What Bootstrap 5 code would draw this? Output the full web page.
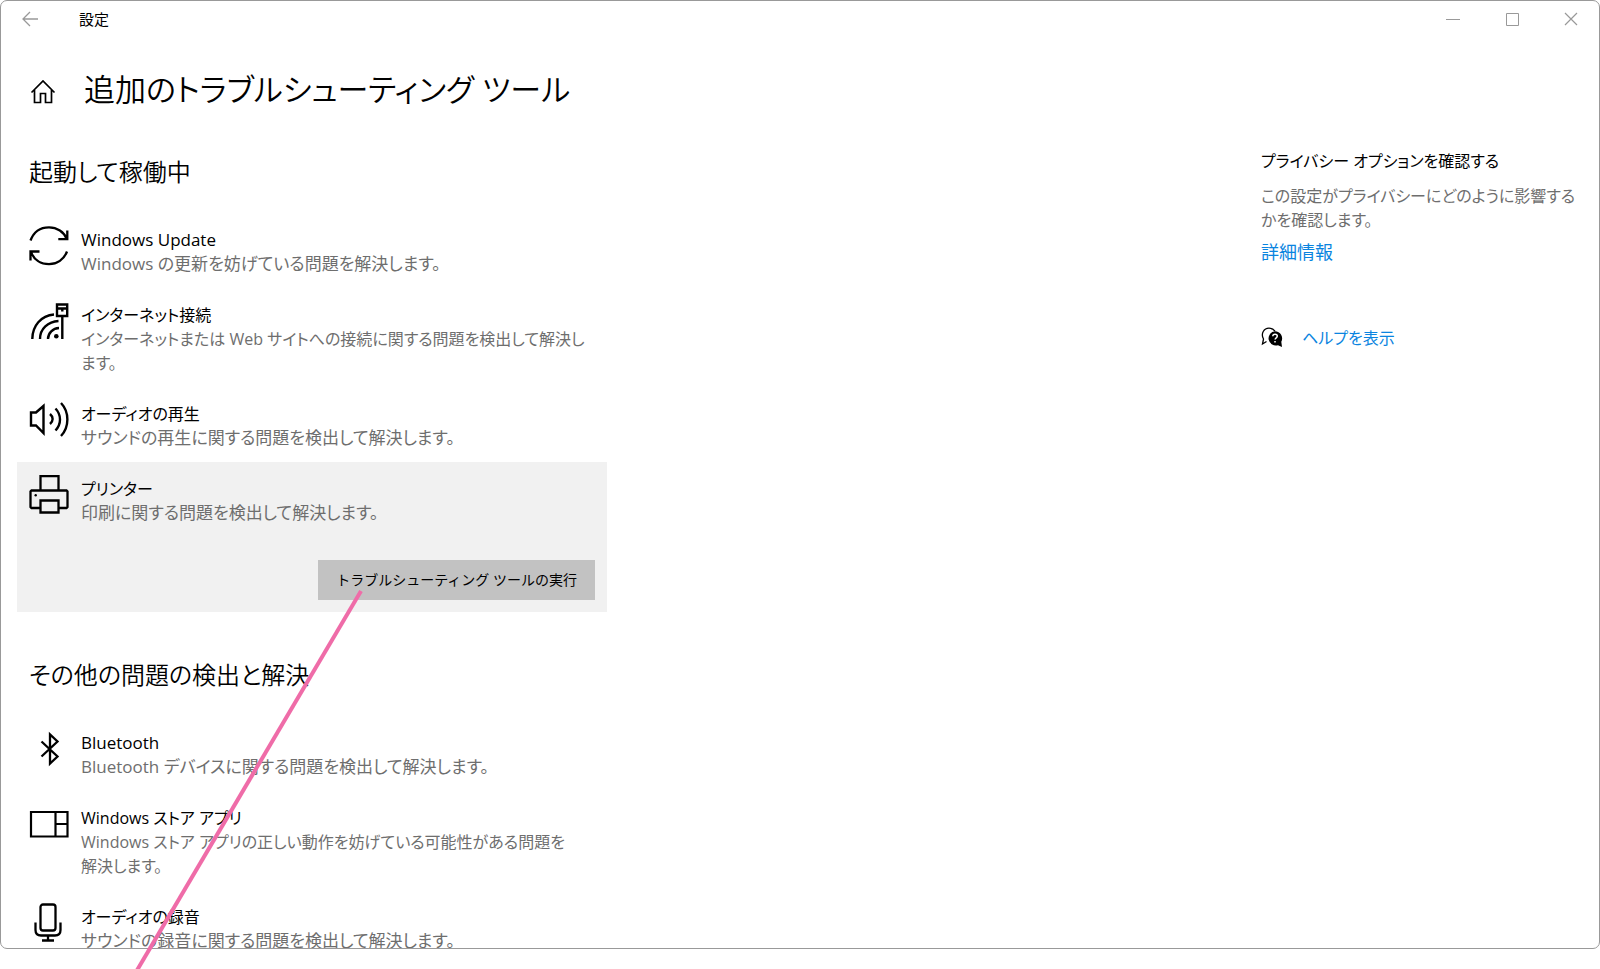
<!DOCTYPE html>
<html lang="ja">
<head>
<meta charset="utf-8">
<meta name="viewport" content="width=device-width, initial-scale=1">
<title>設定</title>
<link rel="stylesheet" href="https://cdn.jsdelivr.net/npm/bootstrap@5.3.0/dist/css/bootstrap.min.css">
<style>
  body { font-family: "Open Sans", "Noto Sans CJK JP", sans-serif; font-feature-settings: "palt"; font-size: 17px; line-height: 24px; color: #000; background: #fff; overflow: hidden; }
  svg { fill: none; stroke: currentColor; flex-shrink: 0; }
  .app-window { height: calc(100vh - 20px); border: 1px solid #999; border-radius: 7px; overflow: hidden; }
  .title-bar { height: 36px; font-size: 15px; padding-left: 20px; }
  .back-btn { margin-right: 38px; }
  .plain-btn { background: none; border: 0; padding: 0; display: flex; color: #999; }
  .win-controls { gap: 43px; padding-right: 20px; }
  .page-head { height: 72px; margin-top: 18px; padding-left: 29px; gap: 28px; }
  .page-head h1 { font-size: 31px; line-height: 48px; font-weight: 350; margin: 0; padding-bottom: 4px; }
  .main-col { width: 590px; margin-left: 16px; }
  .main-col h2 { font-size: 24px; line-height: 32px; font-weight: 350; margin: 0; padding-left: 12px; }
  .first-head { padding-top: 29px; }
  .tools { margin-top: 25px; }
  .second-head { padding-top: 47px; }
  .tool { padding: 13px 12px 11px; }
  .tool + .tool { margin-top: 1px; }
  .tool h3, .tool p { font-size: 17px; line-height: 24px; font-weight: 400; margin: 0; white-space: nowrap; }
  .tool h3 { padding-top: 2px; }
  .tool .kana { font-size: 16px; }
  .muted { color: #6e6e6e; }
  .tool.chosen { background: #f1f1f1; padding-bottom: 12px; }
  .run-btn { background: #c2c2c2; border: 0; border-radius: 0; height: 40px; padding: 0 18px; margin-top: 35px; font-size: 14px; line-height: 24px; color: #000; }
  .side { width: 310px; margin-right: 28px; padding-top: 22px; font-size: 16px; white-space: nowrap; }
  .side h2 { font-size: 16px; line-height: 24px; font-weight: 400; margin: 0 0 11px; }
  .side a { color: #0a84e0; text-decoration: none; }
  .more { margin-top: 8px; font-size: 18px; }
  .help { margin-top: 62px; gap: 19px; }
  .pointer-line { position: absolute; left: 0; top: 0; pointer-events: none; }
</style>
</head>
<body>
<div class="app-window">
  <header class="title-bar d-flex align-items-center justify-content-between">
    <div class="d-flex align-items-center">
      <button class="plain-btn back-btn" type="button" aria-label="戻る"><svg width="20" height="16" viewBox="0 0 20 16" stroke-width="1.3"><path d="M17 8H2M9 1 2 8l7 7"/></svg></button>
      <span>設定</span>
    </div>
    <div class="win-controls d-flex">
      <button class="plain-btn" type="button" aria-label="最小化"><svg width="16" height="16" viewBox="0 0 16 16"><path d="M1 8.500h14"/></svg></button>
      <button class="plain-btn" type="button" aria-label="最大化"><svg width="16" height="16" viewBox="0 0 16 16"><path d="M2.500 2.500h12v12h-12z"/></svg></button>
      <button class="plain-btn" type="button" aria-label="閉じる"><svg width="16" height="16" viewBox="0 0 16 16" stroke-width="1.200"><path d="m2 2 12 12M14 2 2 14"/></svg></button>
    </div>
  </header>

  <div class="page-head d-flex align-items-center">
    <svg width="26" height="26" viewBox="0 0 26 26" stroke-width="1.700"><path d="M1.500 14.500 13 3l11.500 11.500M4.500 11.500v13h6v-9h5v9h6v-13"/></svg>
    <h1>追加のトラブルシューティング ツール</h1>
  </div>

  <div class="d-flex justify-content-between align-items-start">
    <main class="main-col">
      <h2 class="first-head">起動して稼働中</h2>
      <div class="tools">
        <section class="tool d-flex gap-2">
          <svg class="me-1" width="40" height="40" viewBox="0 0 40 40" stroke-width="2.300"><path d="M1.500 14.500C5 5 12 1.300 20 1.300c8 0 15 4.500 18 12M38 25.500c-3 8-10 12.700-18 12.700S5 34 2 26M38.300 4.500v8.700h-9M10.500 25.500h-9v9"/></svg>
          <div><h3>Windows Update</h3><p class="muted">Windows の更新を妨げている問題を解決します。</p></div>
        </section>
        <section class="tool d-flex gap-2">
          <svg class="me-1" width="40" height="40" viewBox="0 0 40 40" stroke-width="2.400"><path d="M28 3.500h10.200v11.500H28zM28 7.500h10.200M33.300 7.500v3M33.300 15v23M3.300 38C3.300 25 12 14.500 25 13.500M11 38c0-10 8-17.500 18.500-18M19 38c0-6 5-10.700 11-11"/><circle cx="27.300" cy="35.300" r="2.300" fill="currentColor" stroke="none"/></svg>
          <div><h3 class="kana">インターネット接続</h3><p class="muted kana">インターネットまたは Web サイトへの接続に関する問題を検出して解決し<br>ます。</p></div>
        </section>
        <section class="tool d-flex gap-2">
          <svg class="me-1" width="40" height="40" viewBox="0 0 40 40" stroke-width="2.400"><path d="M2 12.500h5l7.500-6.500v27L7 25.500H2zM21 14c3.500 3 3.500 7 0 10M26.500 8.500c6 6.500 6 15.500 0 22M32 3c8.500 9 8.500 24 0 33"/></svg>
          <div><h3 class="kana">オーディオの再生</h3><p class="muted">サウンドの再生に関する問題を検出して解決します。</p></div>
        </section>
        <section class="tool chosen">
          <div class="d-flex gap-2">
            <svg class="me-1" width="40" height="40" viewBox="0 0 40 40" stroke-width="2.300"><path d="M11.500 15.500V1.200h18v14.300M11.500 33H2.500l-1-1V16.500l1-1h35l1 1V32l-1 1h-8M11.500 25.500h18v12h-18z"/><circle cx="6.700" cy="20.300" r="1.200" fill="currentColor" stroke="none"/></svg>
            <div><h3 class="kana">プリンター</h3><p class="muted">印刷に関する問題を検出して解決します。</p></div>
          </div>
          <div class="d-flex justify-content-end"><button class="run-btn" type="button">トラブルシューティング ツールの実行</button></div>
        </section>
      </div>

      <h2 class="second-head">その他の問題の検出と解決</h2>
      <div class="tools">
        <section class="tool d-flex gap-2">
          <svg class="me-1" width="40" height="40" viewBox="0 0 40 40" stroke-width="2.300"><path d="m12.500 12.500 16 15-7.500 7V5.500l7.500 7-16 15"/></svg>
          <div><h3>Bluetooth</h3><p class="muted">Bluetooth デバイスに関する問題を検出して解決します。</p></div>
        </section>
        <section class="tool d-flex gap-2">
          <svg class="me-1" width="40" height="40" viewBox="0 0 40 40" stroke-width="2.200"><path d="M2 8h36.500v24.500H2zM26.500 8v24.500M26.500 20h12"/></svg>
          <div><h3 class="kana">Windows ストア アプリ</h3><p class="muted kana">Windows ストア アプリの正しい動作を妨げている可能性がある問題を<br>解決します。</p></div>
        </section>
        <section class="tool d-flex gap-2">
          <svg class="me-1" width="40" height="40" viewBox="0 0 40 40" stroke-width="2.300"><rect x="11.500" y="1.500" width="15" height="26" rx="2.500"/><path d="M6.500 19.500V27q0 5.500 5.500 5.500h14q5.500 0 5.500-5.500v-7.500M19 32.500v5M13 37.500h12"/></svg>
          <div><h3 class="kana">オーディオの録音</h3><p class="muted">サウンドの録音に関する問題を検出して解決します。</p></div>
        </section>
      </div>
    </main>

    <aside class="side">
      <h2>プライバシー オプションを確認する</h2>
      <div class="muted">この設定がプライバシーにどのように影響する<br>かを確認します。</div>
      <div class="more"><a href="#">詳細情報</a></div>
      <div class="help d-flex align-items-center">
        <svg width="22" height="22" viewBox="0 0 22 22" stroke-width="1.300"><path d="M5.500 14.500 1.500 17l1-5C-.5 6.500 3 1.200 8 1.200c2.500 0 4.500 1 6 3"/><path d="M14 4.200a7.200 7.200 0 0 1 6.300 10.600l.7 5.200-4-1.800A7.200 7.200 0 1 1 14 4.200z" fill="currentColor" stroke="none"/><path d="M11.800 9.300c0-3 4.500-2.700 4.500-.2 0 1.800-2.200 1.600-2.200 3.500M14 14v1.600" stroke="#fff" stroke-width="1.500"/></svg>
        <a href="#">ヘルプを表示</a>
      </div>
    </aside>
  </div>
</div>
<svg class="pointer-line" width="380" height="969" viewBox="0 0 380 969" stroke-width="4" style="color:#ef6ca8"><path d="M361 591 136 972"/></svg>
<script src="https://cdn.jsdelivr.net/npm/bootstrap@5.3.0/dist/js/bootstrap.bundle.min.js"></script>
</body>
</html>
